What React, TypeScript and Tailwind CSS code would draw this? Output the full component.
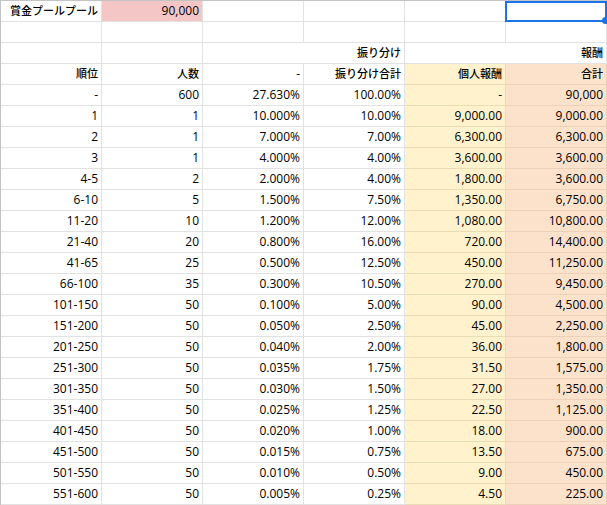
import React from 'react'

type Row = [string, string, string, string, string, string]

const rows: Row[] = [
  ['-', '600', '27.630%', '100.00%', '-', '90,000'],
  ['1', '1', '10.000%', '10.00%', '9,000.00', '9,000.00'],
  ['2', '1', '7.000%', '7.00%', '6,300.00', '6,300.00'],
  ['3', '1', '4.000%', '4.00%', '3,600.00', '3,600.00'],
  ['4-5', '2', '2.000%', '4.00%', '1,800.00', '3,600.00'],
  ['6-10', '5', '1.500%', '7.50%', '1,350.00', '6,750.00'],
  ['11-20', '10', '1.200%', '12.00%', '1,080.00', '10,800.00'],
  ['21-40', '20', '0.800%', '16.00%', '720.00', '14,400.00'],
  ['41-65', '25', '0.500%', '12.50%', '450.00', '11,250.00'],
  ['66-100', '35', '0.300%', '10.50%', '270.00', '9,450.00'],
  ['101-150', '50', '0.100%', '5.00%', '90.00', '4,500.00'],
  ['151-200', '50', '0.050%', '2.50%', '45.00', '2,250.00'],
  ['201-250', '50', '0.040%', '2.00%', '36.00', '1,800.00'],
  ['251-300', '50', '0.035%', '1.75%', '31.50', '1,575.00'],
  ['301-350', '50', '0.030%', '1.50%', '27.00', '1,350.00'],
  ['351-400', '50', '0.025%', '1.25%', '22.50', '1,125.00'],
  ['401-450', '50', '0.020%', '1.00%', '18.00', '900.00'],
  ['451-500', '50', '0.015%', '0.75%', '13.50', '675.00'],
  ['501-550', '50', '0.010%', '0.50%', '9.00', '450.00'],
  ['551-600', '50', '0.005%', '0.25%', '4.50', '225.00'],
]

const base =
  'h-[21px] shrink-0 border-r border-b pr-[3px] text-right leading-[20px] whitespace-nowrap'
const plain = `${base} w-[101px] overflow-hidden border-[#e2e2e2] bg-white`
const yellow = `${base} w-[101px] overflow-hidden border-[#eadcb4] bg-[#fff2cc]`
const orange = `${base} w-[101px] overflow-hidden border-[#ecd0b8] bg-[#fce2cb]`

function Jp({ children }: { children: React.ReactNode }) {
  return <span className="text-[11px] font-medium">{children}</span>
}

export default function App() {
  return (
    <div
      className="w-[607px] h-[505px] overflow-hidden bg-white text-[12px] text-black"
      style={{ fontFamily: '"Open Sans", "Noto Sans CJK JP", sans-serif' }}
    >
      <div className="w-[607px] border-t border-l border-[#c4c4c4]">
        {/* Row 1 */}
        <div className="flex">
          <div className={plain}>
            <Jp>賞金プールプール</Jp>
          </div>
          <div className={`${base} w-[101px] overflow-hidden border-[#e2e2e2] bg-[#f4c7c6]`}>90,000</div>
          <div className={plain}></div>
          <div className={plain}></div>
          <div className={plain}></div>
          <div className={`${base} relative w-[101px] border-[#e2e2e2] bg-white`}>
            <div className="absolute -left-px top-0 h-[21px] w-[102px] border-2 border-[#1a73e8]"></div>
            <div className="absolute -right-[3px] -bottom-[3px] h-[7px] w-[7px] rounded-full bg-[#1a73e8]"></div>
          </div>
        </div>

        {/* Row 2 */}
        <div className="flex">
          <div className={plain}></div>
          <div className={plain}></div>
          <div className={plain}></div>
          <div className={plain}></div>
          <div className={plain}></div>
          <div className={plain}></div>
        </div>

        {/* Row 3 */}
        <div className="flex">
          <div className={plain}></div>
          <div className={plain}></div>
          <div className={`${base} w-[202px] border-[#e2e2e2] bg-white`}>
            <Jp>振り分け</Jp>
          </div>
          <div className={`${base} w-[202px] border-[#e2e2e2] bg-white`}>
            <Jp>報酬</Jp>
          </div>
        </div>

        {/* Row 4 */}
        <div className="flex">
          <div className={plain}>
            <Jp>順位</Jp>
          </div>
          <div className={plain}>
            <Jp>人数</Jp>
          </div>
          <div className={plain}>-</div>
          <div className={plain}>
            <Jp>振り分け合計</Jp>
          </div>
          <div className={yellow}>
            <Jp>個人報酬</Jp>
          </div>
          <div className={orange}>
            <Jp>合計</Jp>
          </div>
        </div>

        {rows.map((r, i) => (
          <div key={i} className="flex">
            <div className={plain}>{r[0]}</div>
            <div className={plain}>{r[1]}</div>
            <div className={plain}>{r[2]}</div>
            <div className={plain}>{r[3]}</div>
            <div className={yellow}>{r[4]}</div>
            <div className={orange}>{r[5]}</div>
          </div>
        ))}
      </div>
    </div>
  )
}
